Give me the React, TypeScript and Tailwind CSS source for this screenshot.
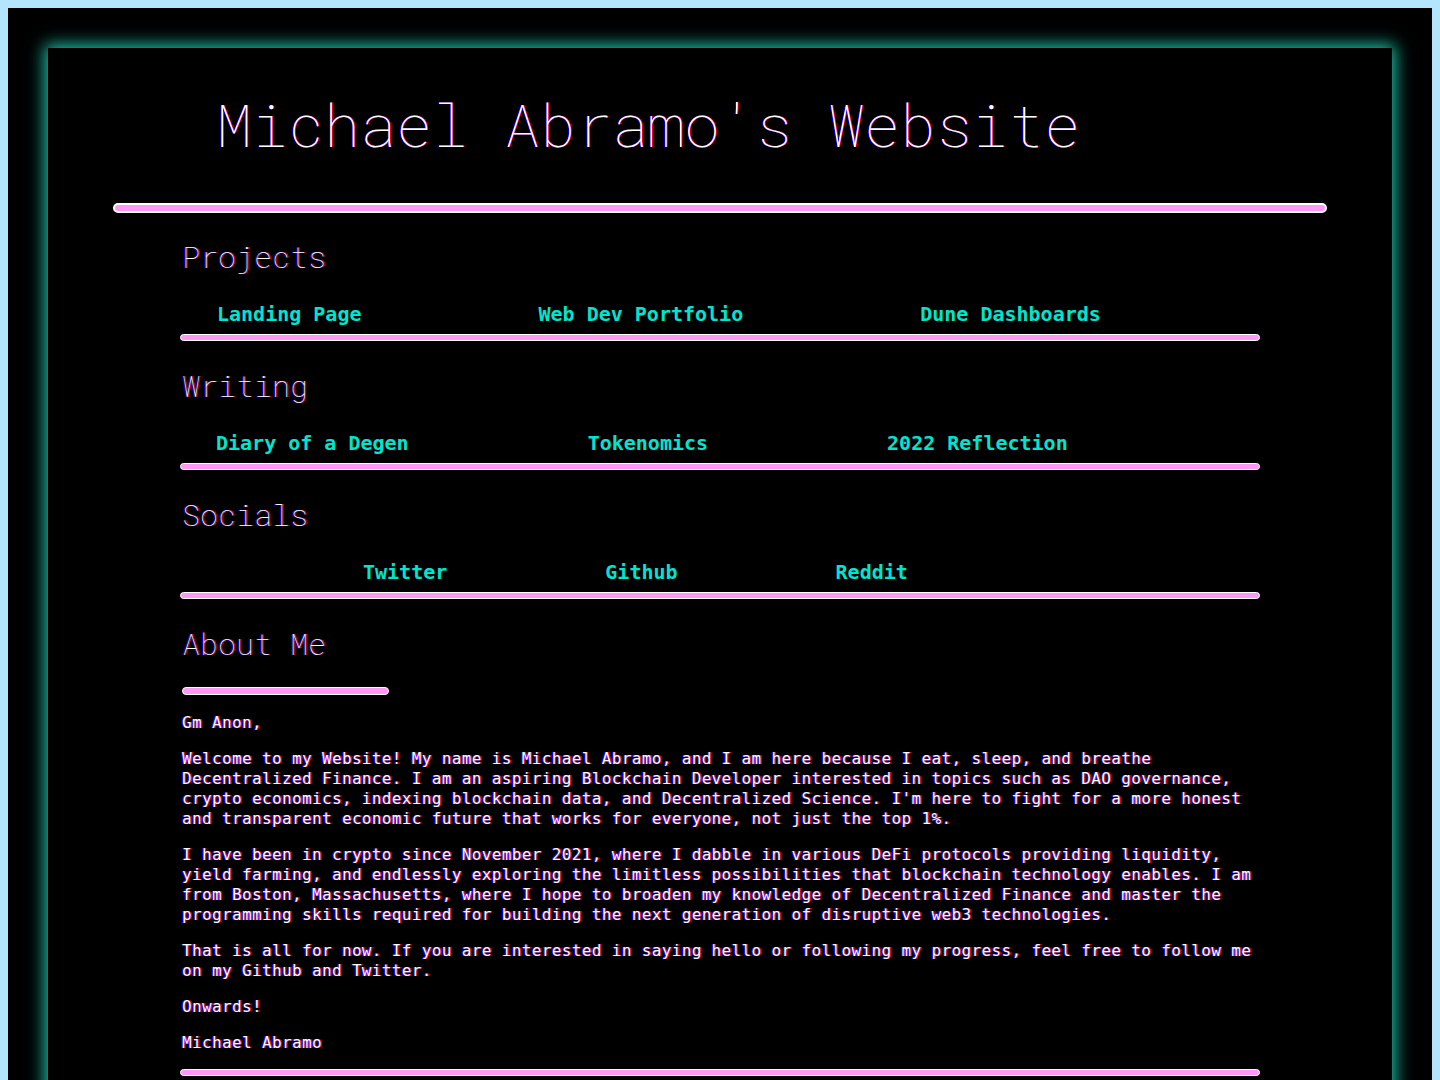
import React from 'react'

type Link = { label: string }

interface Section {
  title: string
  pad: string
  gap: string
  links: Link[]
}

const sections: Section[] = [
  {
    title: 'Projects',
    pad: 'pl-[37px]',
    gap: 'gap-[177px]',
    links: [{ label: 'Landing Page' }, { label: 'Web Dev Portfolio' }, { label: 'Dune Dashboards' }],
  },
  {
    title: 'Writing',
    pad: 'pl-[36px]',
    gap: 'gap-[179px]',
    links: [{ label: 'Diary of a Degen' }, { label: 'Tokenomics' }, { label: '2022 Reflection' }],
  },
  {
    title: 'Socials',
    pad: 'pl-[183px]',
    gap: 'gap-[158px]',
    links: [{ label: 'Twitter' }, { label: 'Github' }, { label: 'Reddit' }],
  },
]

const paragraphs = [
  'Gm Anon,',
  "Welcome to my Website! My name is Michael Abramo, and I am here because I eat, sleep, and breathe Decentralized Finance. I am an aspiring Blockchain Developer interested in topics such as DAO governance, crypto economics, indexing blockchain data, and Decentralized Science. I'm here to fight for a more honest and transparent economic future that works for everyone, not just the top 1%.",
  'I have been in crypto since November 2021, where I dabble in various DeFi protocols providing liquidity, yield farming, and endlessly exploring the limitless possibilities that blockchain technology enables. I am from Boston, Massachusetts, where I hope to broaden my knowledge of Decentralized Finance and master the programming skills required for building the next generation of disruptive web3 technologies.',
  'That is all for now. If you are interested in saying hello or following my progress, feel free to follow me on my Github and Twitter.',
  'Onwards!',
  'Michael Abramo',
]

function Bar({ className = '' }: { className?: string }) {
  return <div className={`h-[7px] rounded-full border border-white bg-[#ff99f5] ${className}`} />
}

function Heading({ children }: { children: React.ReactNode }) {
  return (
    <h2 className="pl-[2px] font-['Roboto_Mono',monospace] font-thin text-[30px] leading-[36px] text-white [text-shadow:-1px_0_#0000ff,1px_0_#ff0000]">
      {children}
    </h2>
  )
}

export default function App() {
  return (
    <div className="min-h-screen bg-[#b3e5fc] pl-2 pr-2 pt-2">
      <div className="bg-black p-10">
        <div className="bg-black shadow-[0_0_16px_3px_#1fc9ad] px-[65px] pt-[40px] pb-16">
          <h1 className="pl-[103px] font-['Roboto_Mono',monospace] font-thin text-[60px] leading-[72px] text-white [text-shadow:-1px_0_#0000ff,1px_0_#ff0000]">
            Michael Abramo's Website
          </h1>
          <div className="mt-[43px] h-[10px] rounded-full border-2 border-white bg-[#ff99f5]" />

          <div className="mx-[67px] pt-[26px]">
            {sections.map((s) => (
              <section key={s.title} className="pb-[27px]">
                <Heading>{s.title}</Heading>
                <ul className={`mt-[27px] flex ${s.pad} ${s.gap}`}>
                  {s.links.map((l) => (
                    <li key={l.label}>
                      <a className="font-['DejaVu_Sans_Mono',monospace] font-bold text-[20px] leading-[24px] text-[#00e5d0]">
                        {l.label}
                      </a>
                    </li>
                  ))}
                </ul>
                <Bar className="mt-[7px]" />
              </section>
            ))}

            <section>
              <Heading>About Me</Heading>
              <Bar className="mt-[25px] ml-[2px] w-[207px] h-[8px]" />
              <div className="mt-[18px] pl-[2px] flex flex-col gap-4 font-['DejaVu_Sans_Mono',monospace] text-[16px] leading-[20px] tracking-[0.36px] text-white [text-shadow:-1px_0_#0000ff,1px_0_#ff0000]">
                {paragraphs.map((p, i) => (
                  <p key={i}>{p}</p>
                ))}
              </div>
              <Bar className="mt-[16px]" />
            </section>
          </div>
        </div>
      </div>
    </div>
  )
}
